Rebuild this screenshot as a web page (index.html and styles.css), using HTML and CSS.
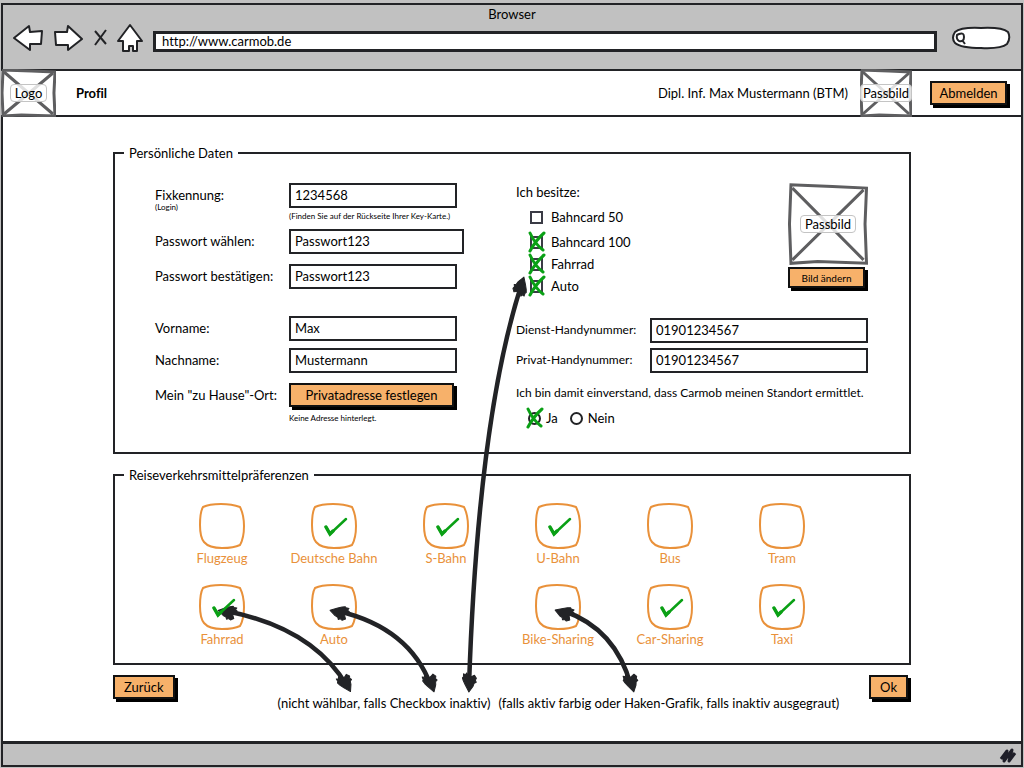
FILE: index.html
```html
<!DOCTYPE html>
<html lang="de">
<head>
<meta charset="utf-8">
<meta name="viewport" content="width=device-width, initial-scale=1">
<title>Carmob – Profil</title>
<link rel="stylesheet" href="styles.css">
</head>
<body>
<svg class="defs" aria-hidden="true">
  <symbol id="tile" viewBox="0 0 46 46">
    <path d="M4 4Q10 1 22 1Q33 1 41 4Q45 12 45 23Q45 35 41 42Q35 45 23 45Q10 45 5 39Q1 34 1 22Q1 9 4 4Z" fill="#fff" stroke="#e9913a" stroke-width="2"/>
  </symbol>
  <symbol id="tick" viewBox="0 0 24 20">
    <path d="M2 10L6 17L22 2" fill="none" stroke="#0aa015" stroke-width="2.5" stroke-linecap="round"/>
    <path d="M2 10L6 17L9 14" fill="none" stroke="#0aa015" stroke-width="3.5" stroke-linecap="round"/>
  </symbol>
  <symbol id="cross" viewBox="0 0 18 22">
    <path d="M2 2Q7 13 15 19M16 2Q8 9 2 20" fill="none" stroke="#0aa015" stroke-width="3" stroke-linecap="round"/>
  </symbol>
  <symbol id="picture" viewBox="0 0 54 48" preserveAspectRatio="none">
    <path d="M1 1L53 3L52 46L2 46Z" fill="#fff"/>
    <path d="M3 3L51 45M51 4L3 45" fill="none" stroke="#5e5e60" stroke-width="3" vector-effect="non-scaling-stroke"/>
    <path d="M1 1L30 2L53 3L52 24L53 47L20 46L2 47L1 24L2 1" fill="none" stroke="#5e5e60" stroke-width="3" vector-effect="non-scaling-stroke"/>
  </symbol>
  <symbol id="head" viewBox="-20 -12 40 24">
    <path d="M-3 0L4 -4L8 -6L11 -7L12 -6L15 -6L14 -4L16 -3L13 -1L12 1L13 3L14 5L11 7L9 6L7 7L6 5L3 4Z" fill="#222326" stroke="#222326" stroke-linejoin="round"/>
  </symbol>
</svg>

<div class="window">
  <header class="chrome">
    <div class="title">Browser</div>
    <div class="toolbar">
      <div class="nav">
        <button class="icon" aria-label="Zurückblättern"><svg width="30" height="28" viewBox="0 0 30 28"><path d="M1 14L16 2L17 8L29 7L28 20L17 20L17 26Z"/></svg></button>
        <button class="icon" aria-label="Vorblättern"><svg width="30" height="28" viewBox="0 0 30 28"><path d="M2 8L14 8L15 2L29 15L15 26L15 21L3 21Z"/></svg></button>
        <button class="icon" aria-label="Stopp"><svg width="14" height="28" viewBox="0 0 14 28"><path d="M2 7L13 20M13 6L2 21"/></svg></button>
        <button class="icon" aria-label="Startseite"><svg width="26" height="30" viewBox="0 0 26 30"><path d="M13 2L25 18L20 18L20 28L16 28L16 23L12 23L12 28L6 28L6 18L1 18Z"/></svg></button>
      </div>
      <input class="url" type="text" aria-label="Adresse" value="http://www.carmob.de">
      <button class="icon" aria-label="Suchen"><svg width="60" height="24" viewBox="0 0 60 24"><path d="M4 6Q10 1 30 2Q51 1 57 6Q60 12 56 18Q50 23 30 22Q10 22 4 17Q0 12 4 6Z"/><path d="M8 8Q13 6 13 11Q13 16 8 15Q5 13 6 9L8 8M11 14L14 18"/></svg></button>
    </div>
  </header>

  <div class="appbar">
    <div class="picture logo"><svg><use href="#picture"/></svg><span>Logo</span></div>
    <h1>Profil</h1>
    <span class="user">Dipl. Inf. Max Mustermann (BTM)</span>
    <div class="picture avatar"><svg><use href="#picture"/></svg><span>Passbild</span></div>
    <button class="btn logout">Abmelden</button>
  </div>

  <main>
    <form>
      <fieldset>
        <legend>Persönliche Daten</legend>
        <div class="personal">
          <div class="column">
            <div class="row">
              <label for="login">Fixkennung:<small>(Login)</small></label>
              <div><input class="field" id="login" type="text" value="1234568"><small class="hint">(Finden Sie auf der Rückseite Ihrer Key-Karte.)</small></div>
            </div>
            <div class="row gap-s"><label for="pw">Passwort wählen:</label><input class="field wide" id="pw" type="text" value="Passwort123"></div>
            <div class="row gap-m"><label for="pw2">Passwort bestätigen:</label><input class="field" id="pw2" type="text" value="Passwort123"></div>
            <div class="row gap-l"><label for="first">Vorname:</label><input class="field" id="first" type="text" value="Max"></div>
            <div class="row gap-s"><label for="last">Nachname:</label><input class="field" id="last" type="text" value="Mustermann"></div>
            <div class="row gap-m"><label for="home">Mein "zu Hause"-Ort:</label>
              <div><button class="btn home" id="home" type="button">Privatadresse festlegen</button><small class="hint">Keine Adresse hinterlegt.</small></div>
            </div>
          </div>
          <div class="column">
            <div class="top">
              <div class="owned">
                <p>Ich besitze:</p>
                <label class="opt"><span class="box"><input type="checkbox"></span>Bahncard 50</label>
                <label class="opt"><span class="box"><input type="checkbox" checked><svg><use href="#cross"/></svg></span>Bahncard 100</label>
                <label class="opt"><span class="box"><input type="checkbox" checked><svg><use href="#cross"/></svg></span>Fahrrad</label>
                <label class="opt"><span class="box"><input type="checkbox" checked><svg><use href="#cross"/></svg></span>Auto</label>
              </div>
              <div class="photo">
                <div class="picture"><svg><use href="#picture"/></svg><span>Passbild</span></div>
                <button class="btn small" type="button">Bild ändern</button>
              </div>
            </div>
            <div class="row phone"><label for="work">Dienst-Handynummer:</label><input class="field" id="work" type="tel" value="01901234567"></div>
            <div class="row phone gap-xs"><label for="priv">Privat-Handynummer:</label><input class="field" id="priv" type="tel" value="01901234567"></div>
            <p class="consent">Ich bin damit einverstand, dass Carmob meinen Standort ermittlet.</p>
            <div class="radios">
              <label class="opt"><span class="box"><input type="radio" name="loc" checked><svg><use href="#cross"/></svg></span>Ja</label>
              <label class="opt"><span class="box"><input type="radio" name="loc"></span>Nein</label>
            </div>
          </div>
        </div>
      </fieldset>

      <fieldset>
        <legend>Reiseverkehrsmittelpräferenzen</legend>
        <div class="modes">
          <label class="mode"><input type="checkbox"><svg class="tile"><use href="#tile"/></svg>Flugzeug</label>
          <label class="mode"><input type="checkbox" checked><svg class="tile"><use href="#tile"/></svg><svg class="tick"><use href="#tick"/></svg>Deutsche Bahn</label>
          <label class="mode"><input type="checkbox" checked><svg class="tile"><use href="#tile"/></svg><svg class="tick"><use href="#tick"/></svg>S-Bahn</label>
          <label class="mode"><input type="checkbox" checked><svg class="tile"><use href="#tile"/></svg><svg class="tick"><use href="#tick"/></svg>U-Bahn</label>
          <label class="mode"><input type="checkbox"><svg class="tile"><use href="#tile"/></svg>Bus</label>
          <label class="mode"><input type="checkbox"><svg class="tile"><use href="#tile"/></svg>Tram</label>
          <label class="mode"><input type="checkbox" checked><svg class="tile"><use href="#tile"/></svg><svg class="tick"><use href="#tick"/></svg>Fahrrad</label>
          <label class="mode"><input type="checkbox"><svg class="tile"><use href="#tile"/></svg>Auto</label>
          <label class="mode second-half"><input type="checkbox"><svg class="tile"><use href="#tile"/></svg>Bike-Sharing</label>
          <label class="mode"><input type="checkbox" checked><svg class="tile"><use href="#tile"/></svg><svg class="tick"><use href="#tick"/></svg>Car-Sharing</label>
          <label class="mode"><input type="checkbox" checked><svg class="tile"><use href="#tile"/></svg><svg class="tick"><use href="#tick"/></svg>Taxi</label>
        </div>
      </fieldset>

      <div class="actions">
        <button class="btn" type="button">Zurück</button>
        <div class="notes"><span>(nicht wählbar, falls Checkbox inaktiv)</span><span>(falls aktiv farbig oder Haken-Grafik, falls inaktiv ausgegraut)</span></div>
        <button class="btn ok" type="submit">Ok</button>
      </div>
    </form>

    <svg class="arrows" width="798" height="600" viewBox="113 117 798 600" aria-hidden="true">
      <g fill="none" stroke="#222326" stroke-width="4.5">
        <path d="M226 611Q313 628 347 686"/>
        <path d="M338 611Q410 628 431 686"/>
        <path d="M564 611Q616 629 631 686"/>
        <path d="M469 686Q478 420 521 286"/>
      </g>
      <g>
        <use href="#head" x="-20" y="-12" width="40" height="24" transform="translate(221 611) rotate(11)"/>
        <use href="#head" x="-20" y="-12" width="40" height="24" transform="translate(349 689) rotate(-120)"/>
        <use href="#head" x="-20" y="-12" width="40" height="24" transform="translate(333 611) rotate(13)"/>
        <use href="#head" x="-20" y="-12" width="40" height="24" transform="translate(433 689) rotate(-110)"/>
        <use href="#head" x="-20" y="-12" width="40" height="24" transform="translate(558 611) rotate(18)"/>
        <use href="#head" x="-20" y="-12" width="40" height="24" transform="translate(633 689) rotate(-106)"/>
        <use href="#head" x="-20" y="-12" width="40" height="24" transform="translate(469 689) rotate(-88)"/>
        <use href="#head" x="-20" y="-12" width="40" height="24" transform="translate(523 280) rotate(108)"/>
      </g>
    </svg>
  </main>

  <footer class="status"><svg width="18" height="18" viewBox="0 0 18 18"><path d="M2 13L8 5L5 15L13 4L10 15L16 7" fill="none" stroke="#1e1e28" stroke-width="3" stroke-linejoin="round"/></svg></footer>
</div>
</body>
</html>
```

FILE: styles.css
```css
* { box-sizing: border-box; }

body {
  margin: 0;
  background: #c1c1c1;
  color: #000;
  font: 13px/18px Lato, "Open Sans", sans-serif;
  font-variant-ligatures: none;
}

p, h1 { margin: 0; }
input, button { font: inherit; color: inherit; }
.defs { position: absolute; width: 0; height: 0; }

.window {
  display: flex;
  flex-direction: column;
  min-height: 100vh;
  padding: 3px 1px 1px;
}

/* browser chrome */
.chrome {
  border: 2px solid #222326;
  background: #c1c1c1;
  padding-bottom: 16px;
}
.title { text-align: center; line-height: 18px; }
.toolbar { display: flex; align-items: center; padding: 0 10px; }
.nav { display: flex; align-items: center; gap: 10px; }
.icon { display: block; border: 0; padding: 0; background: none; }
.icon svg { display: block; fill: #fff; stroke: #222326; stroke-width: 2; stroke-linejoin: round; }
.url {
  flex: 1;
  min-width: 0;
  height: 21px;
  margin: 6px 14px 0 10px;
  padding: 0 6px;
  border: 3px solid #222326;
  border-radius: 0;
  background: #fff;
}

/* application bar */
.appbar {
  display: flex;
  align-items: center;
  height: 46px;
  padding-right: 14px;
  background: #fff;
  border: solid #222326;
  border-width: 0 2px 2px 0;
}
.appbar h1 { font-size: 13px; line-height: 18px; margin-left: 20px; }
.user { margin-left: auto; margin-right: 12px; white-space: nowrap; }
.picture { position: relative; display: grid; place-items: center; }
.picture svg { position: absolute; inset: 0; width: 100%; height: 100%; }
.picture span {
  position: relative;
  padding: 0 4px;
  border: 1px solid #c4c4c4;
  border-radius: 4px;
  background: rgba(255, 255, 255, .8);
  line-height: 16px;
}
.appbar .picture { height: 48px; }
.logo { width: 55px; }
.avatar { width: 52px; }
.appbar .avatar span { padding: 0 2px; }

.btn {
  height: 24px;
  padding: 0 9px;
  border: 2px solid #111;
  border-radius: 0;
  background: #f7b16a;
  box-shadow: 3px 3px 0 #000;
  line-height: 18px;
  white-space: nowrap;
}
.logout { margin-left: 18px; width: 77px; padding: 0; }

/* page */
main {
  position: relative;
  flex: 1;
  padding: 27px 24px 0;
  background: #fff;
  border: solid #222326;
  border-width: 0 2px;
}
form { max-width: 798px; margin: 0 auto; }

fieldset {
  min-width: 0;
  margin: 0 0 12px;
  padding: 0 9px;
  border: 2px solid #222326;
}
fieldset + fieldset { margin-bottom: 10px; }
legend { padding: 0 5px; line-height: 18px; }

.personal {
  display: grid;
  grid-template-columns: 361px 1fr;
  padding: 21px 32px 23px 31px;
}
.row { display: grid; grid-template-columns: 134px 1fr; }
.row label { line-height: 24px; white-space: nowrap; }
.row label small { display: block; }
small { font-size: 8px; line-height: 12px; }
.row label small { margin-top: -6px; }
.hint { display: block; margin-top: 2px; }
.gap-xs { margin-top: 5px; }
.gap-s { margin-top: 7px; }
.gap-m { margin-top: 10px; }
.gap-l { margin-top: 27px; }

.field {
  display: block;
  width: 168px;
  height: 25px;
  padding: 0 4px 2px;
  border: 2px solid #222326;
  border-radius: 0;
  background: #fff;
}
.field.wide { width: 175px; }
.home { display: block; width: 165px; padding: 0; margin-bottom: 5px; }

.top { display: flex; justify-content: space-between; height: 135px; }
.owned .opt { margin-left: 14px; }
.owned .opt:nth-of-type(1) { margin: 5px 0 3px 14px; }
.opt { display: flex; align-items: center; gap: 8px; line-height: 22px; }
.box { position: relative; display: block; width: 13px; height: 13px; }
.box input {
  appearance: none;
  display: block;
  width: 13px;
  height: 13px;
  margin: 0;
  border: 2px solid #3a3b45;
  background: #fff;
}
.box input[type="radio"] { border-radius: 50%; border-color: #222326; }
.box svg { position: absolute; left: -2px; top: -5px; width: 18px; height: 22px; }

.photo .picture { width: 80px; height: 82px; }
.small {
  display: block;
  width: 77px;
  height: 21px;
  margin-top: 2px;
  padding: 0;
  font-size: 10px;
  line-height: 16px;
}
.phone label { font-size: 12px; }
.phone .field { width: 100%; }
.consent { margin-top: 11px; font-size: 12px; white-space: nowrap; }
.radios { display: flex; gap: 12px; margin: 5px 0 0 12px; }
.radios .opt { gap: 5px; }

/* transport modes */
.modes {
  display: grid;
  grid-template-columns: repeat(6, 112px);
  row-gap: 17px;
  padding: 19px 0 15px 42px;
  color: #e9913a;
}
.mode { position: relative; display: flex; flex-direction: column; align-items: center; }
.mode input { position: absolute; width: 46px; height: 46px; margin: 0; opacity: 0; }
.mode .tile { width: 46px; height: 46px; }
.mode .tick { position: absolute; z-index: 2; top: 14px; left: 46px; width: 24px; height: 20px; }
.second-half { grid-column: 4; }

.actions { display: flex; padding-right: 3px; }
.ok { margin-left: auto; }
.notes { display: flex; gap: 8px; padding: 19px 0 20px 103px; white-space: nowrap; }

.arrows {
  position: absolute;
  z-index: 1;
  top: 0;
  left: calc(50% - 399px);
  pointer-events: none;
}

.status {
  display: flex;
  justify-content: flex-end;
  align-items: center;
  height: 26px;
  padding-right: 4px;
  border: solid #222326;
  border-width: 3px 2px 2px;
  background: #c1c1c1;
}
```
